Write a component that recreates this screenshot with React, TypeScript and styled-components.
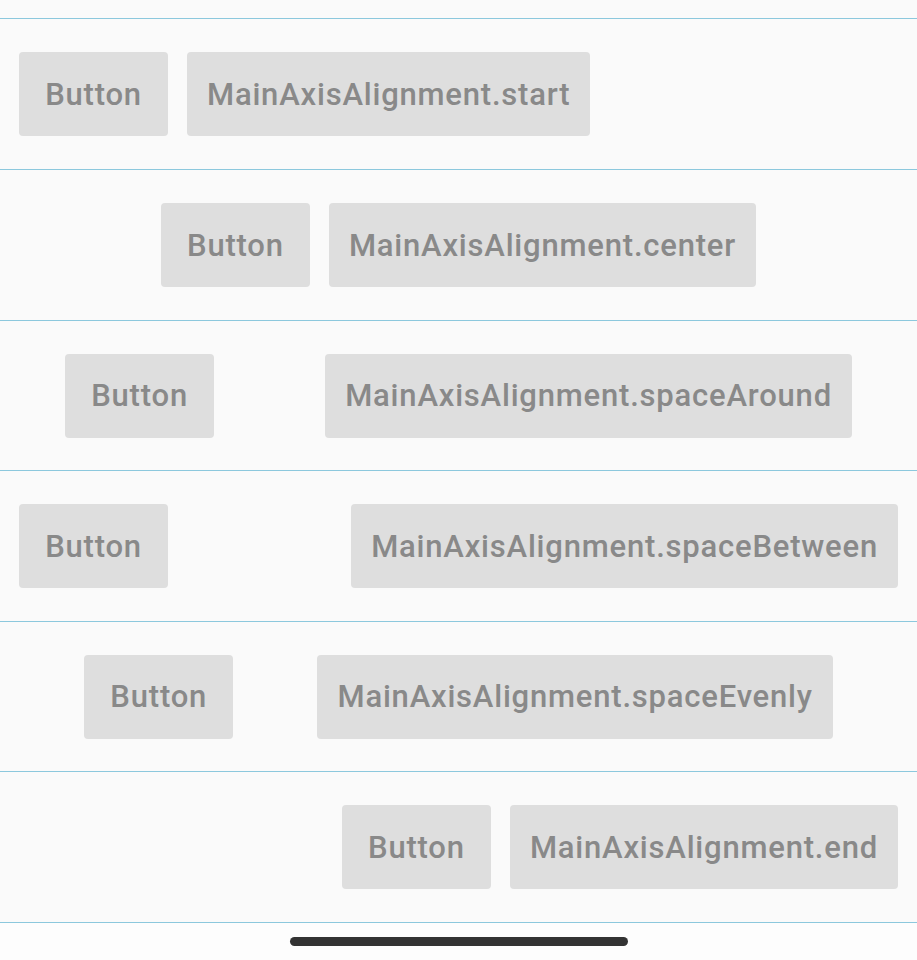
import styled, { createGlobalStyle } from "styled-components";

const GlobalStyle = createGlobalStyle`
  html, body {
    margin: 0;
    padding: 0;
    background: #fafafa;
  }
  body {
    font-family: Roboto, "Noto Sans", sans-serif;
  }
`;

const Screen = styled.div`
  width: 917px;
  height: 960px;
  display: flex;
  flex-direction: column;
  background: #fafafa;
  overflow: hidden;
`;

const TopGap = styled.div`
  height: 18px;
  flex-shrink: 0;
`;

type Justify = "flex-start" | "center" | "space-around" | "space-between" | "space-evenly" | "flex-end";

const Row = styled.div<{ $justify: Justify; $height: number }>`
  box-sizing: border-box;
  height: ${props => props.$height}px;
  flex-shrink: 0;
  display: flex;
  align-items: center;
  justify-content: ${props => props.$justify};
  padding: 0 9.5px;
  border-top: 1px solid #8cc8dd;
`;

const RowsEnd = styled.div`
  border-top: 1px solid #8cc8dd;
`;

const FlatButton = styled.div`
  box-sizing: border-box;
  height: 84px;
  min-width: 149px;
  margin: 0 9.5px;
  padding: 0 20px;
  display: flex;
  align-items: center;
  justify-content: center;
  background: #dedede;
  border-radius: 4px;
  color: #898989;
  font-size: 31px;
  font-weight: 500;
  letter-spacing: 0.8px;
  white-space: nowrap;
`;

const Footer = styled.div`
  flex: 1;
  display: flex;
  justify-content: center;
  padding-top: 14px;
  background: #fdfdfd;
`;

const HomeBar = styled.div`
  width: 338px;
  height: 9px;
  border-radius: 5px;
  background: #333333;
`;

const rows: { label: string; justify: Justify; height: number }[] = [
  { label: "MainAxisAlignment.start", justify: "flex-start", height: 151 },
  { label: "MainAxisAlignment.center", justify: "center", height: 151 },
  { label: "MainAxisAlignment.spaceAround", justify: "space-around", height: 150 },
  { label: "MainAxisAlignment.spaceBetween", justify: "space-between", height: 151 },
  { label: "MainAxisAlignment.spaceEvenly", justify: "space-evenly", height: 150 },
  { label: "MainAxisAlignment.end", justify: "flex-end", height: 151 },
];

export default function App() {
  return (
    <>
      <GlobalStyle />
      <Screen>
        <TopGap />
        {rows.map(row => (
          <Row key={row.label} $justify={row.justify} $height={row.height}>
            <FlatButton>Button</FlatButton>
            <FlatButton>{row.label}</FlatButton>
          </Row>
        ))}
        <RowsEnd />
        <Footer>
          <HomeBar />
        </Footer>
      </Screen>
    </>
  );
}
